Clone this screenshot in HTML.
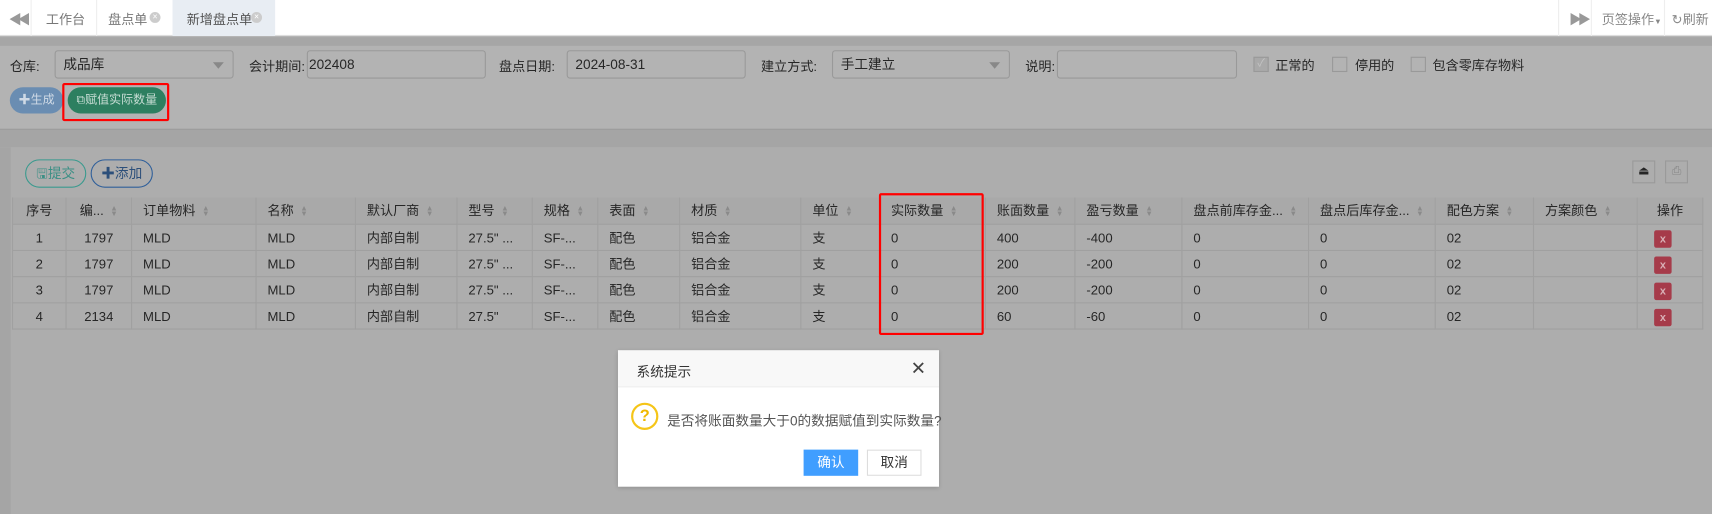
<!DOCTYPE html>
<html><head><meta charset="utf-8"><style>
*{margin:0;padding:0;box-sizing:border-box}
html,body{width:1712px;height:514px;overflow:hidden;background:#b3b3b3}
#w{position:absolute;left:0;top:0;width:1568px;height:471px;transform:scale(1.09184,1.0913);transform-origin:0 0;font-family:"Liberation Sans","Noto Sans CJK SC",sans-serif;font-size:12px;color:#262626}
.a{position:absolute;white-space:nowrap}
.inp{position:absolute;height:26px;border:1px solid #999;border-radius:3px;background:#b3b3b3;padding-left:7px;line-height:24px;font-size:12.5px}
.tri{position:absolute;right:8px;top:10px;border:5px solid transparent;border-top:6px solid #888}
.cb{position:absolute;width:14px;height:14px;border:1px solid #999;background:#b3b3b3;top:52px}
.th,.td{position:absolute;border-right:1px solid #a0a0a0;border-bottom:1px solid #a0a0a0;padding-left:10px;line-height:24px;overflow:hidden;white-space:nowrap}
.th{background:#a9a9a9;height:25px}
.s{display:inline-block;margin-left:6px;font-size:7px;color:#8a8a8a;line-height:5px;vertical-align:middle}
.del{position:absolute;width:16px;height:16px;background:#a63b4a;border-radius:2px;color:#d9b0b6;font-size:10px;font-weight:bold;text-align:center;line-height:17px}
</style></head><body><div id="w">
<div class="a" style="left:0;top:0;width:1568px;height:33px;background:#fff;border-bottom:1px solid #ddd"></div>
<div class="a" style="left:8px;top:9px;color:#999;font-size:12px;letter-spacing:-4px">◀◀</div>
<div class="a" style="left:28px;top:0;width:1px;height:33px;background:#eee"></div>
<div class="a" style="left:42px;top:9px;color:#777">工作台</div>
<div class="a" style="left:88px;top:0;width:1px;height:33px;background:#eee"></div>
<div class="a" style="left:99px;top:9px;color:#777">盘点单</div>
<div class="a" style="left:137px;top:11px;width:10px;height:10px;border-radius:50%;background:#ccc;color:#fff;font-size:8px;line-height:10px;text-align:center">×</div>
<div class="a" style="left:158px;top:0;width:94px;height:33px;background:#e8edf3"></div>
<div class="a" style="left:171px;top:9px;color:#555">新增盘点单</div>
<div class="a" style="left:230px;top:11px;width:10px;height:10px;border-radius:50%;background:#ccc;color:#fff;font-size:8px;line-height:10px;text-align:center">×</div>
<div class="a" style="left:1427px;top:0;width:1px;height:33px;background:#eee"></div>
<div class="a" style="left:1437px;top:9px;color:#999;font-size:12px;letter-spacing:-4px">▶▶</div>
<div class="a" style="left:1457px;top:0;width:1px;height:33px;background:#eee"></div>
<div class="a" style="left:1467px;top:9px;color:#888">页签操作<span style="font-size:7px">▼</span></div>
<div class="a" style="left:1524px;top:0;width:1px;height:33px;background:#eee"></div>
<div class="a" style="left:1531px;top:9px;color:#888">↻刷新</div>
<div class="a" style="left:0;top:34px;width:1568px;height:8px;background:#a6a6a6"></div>
<div class="a" style="left:0;top:118px;width:1568px;height:17px;background:#a5a5a5;border-top:1px solid #9c9c9c"></div>
<div class="a" style="left:0;top:135px;width:10px;height:336px;background:#a5a5a5"></div>
<div class="a" style="left:9px;top:52px">仓库:</div>
<div class="inp" style="left:50px;top:46px;width:164px">成品库<div class="tri"></div></div>
<div class="a" style="left:228px;top:52px">会计期间:</div>
<div class="inp" style="left:281px;top:46px;width:164px;padding-left:1px">202408</div>
<div class="a" style="left:457px;top:52px">盘点日期:</div>
<div class="inp" style="left:519px;top:46px;width:164px">2024-08-31</div>
<div class="a" style="left:697px;top:52px">建立方式:</div>
<div class="inp" style="left:762px;top:46px;width:163px">手工建立<div class="tri"></div></div>
<div class="a" style="left:939px;top:52px">说明:</div>
<div class="inp" style="left:968px;top:46px;width:165px"></div>
<div class="cb" style="left:1148px;background:#a9a9a9;color:#c4c4c4;font-size:10px;line-height:12px;text-align:center">✓</div>
<div class="a" style="left:1168px;top:51px">正常的</div>
<div class="cb" style="left:1220px"></div>
<div class="a" style="left:1241px;top:51px">停用的</div>
<div class="cb" style="left:1292px"></div>
<div class="a" style="left:1312px;top:51px">包含零库存物料</div>
<div class="a" style="left:9px;top:80px;width:49px;height:24px;border-radius:12px;background:#6a8db2;color:#d0dae6;font-size:11px;line-height:24px;text-align:center">✚生成</div>
<div class="a" style="left:62px;top:80px;width:90px;height:24px;border-radius:12px;background:#2d7f60;color:#c7ddd4;font-size:11px;line-height:24px;text-align:center">⧉赋值实际数量</div>
<div class="a" style="left:57px;top:76px;width:98px;height:35px;border:2px solid #f00;border-radius:2px"></div>
<div class="a" style="left:10px;top:135px;width:1558px;height:336px;background:#adadad"></div>
<div class="a" style="left:23px;top:146px;width:56px;height:26px;border:1px solid #3a9a8e;border-radius:13px;color:#3b8f85;font-size:12.5px;line-height:24px;text-align:center">🖫提交</div>
<div class="a" style="left:83px;top:146px;width:57px;height:26px;border:1px solid #2f5f9a;border-radius:13px;color:#2c4f7a;font-size:12.5px;line-height:24px;text-align:center"><b>✚</b>添加</div>
<div class="a" style="left:1495px;top:147px;width:21px;height:21px;border:1px solid #999;font-size:11px;text-align:center;line-height:19px">⏏</div>
<div class="a" style="left:1525px;top:147px;width:21px;height:21px;border:1px solid #999;color:#888;font-size:11px;text-align:center;line-height:19px">⎙</div>
<div id="t"></div>
<div class="a" style="left:805px;top:177px;width:96px;height:130px;border:2px solid #f00;border-radius:2px"></div>
<div class="a" style="left:566px;top:321px;width:294px;height:125px;background:#fff;box-shadow:0 1px 4px rgba(0,0,0,.2)"></div>
<div class="a" style="left:566px;top:321px;width:294px;height:34px;background:#f8f8f8;border-bottom:1px solid #eee"></div>
<div class="a" style="left:583px;top:330px;color:#333;font-size:12.5px">系统提示</div>
<div class="a" style="left:834px;top:328px;color:#444;font-size:17px">✕</div>
<div class="a" style="left:578px;top:369px;width:25px;height:25px;border:2px solid #f5c518;border-radius:50%;color:#f0b800;font-size:15px;font-weight:bold;text-align:center;line-height:21px">?</div>
<div class="a" style="left:611px;top:375px;color:#555;font-size:12.5px">是否将账面数量大于0的数据赋值到实际数量?</div>
<div class="a" style="left:736px;top:412px;width:50px;height:24px;background:#409eff;color:#fff;text-align:center;line-height:24px;font-size:12.5px">确认</div>
<div class="a" style="left:794px;top:412px;width:50px;height:24px;border:1px solid #ddd;color:#333;text-align:center;line-height:22px;font-size:12.5px">取消</div>
</div>
<script>
var cols=[[11,61,'序号',0,1],[61,121,'编...',1,1],[121,235,'订单物料',1],[235,326,'名称',1],[326,419,'默认厂商',1],[419,488,'型号',1],[488,548,'规格',1],[548,623,'表面',1],[623,734,'材质',1],[734,806,'单位',1],[806,903,'实际数量',1],[903,985,'账面数量',1],[985,1083,'盈亏数量',1],[1083,1199,'盘点前库存金...',1],[1199,1315,'盘点后库存金...',1],[1315,1405,'配色方案',1],[1405,1500,'方案颜色',1],[1500,1560,'操作',0,1]];
var rows=[['1','1797','MLD','MLD','内部自制','27.5" ...','SF-...','配色','铝合金','支','0','400','-400','0','0','02',''],
['2','1797','MLD','MLD','内部自制','27.5" ...','SF-...','配色','铝合金','支','0','200','-200','0','0','02',''],
['3','1797','MLD','MLD','内部自制','27.5" ...','SF-...','配色','铝合金','支','0','200','-200','0','0','02',''],
['4','2134','MLD','MLD','内部自制','27.5"','SF-...','配色','铝合金','支','0','60','-60','0','0','02','']];
var h='';
cols.forEach(function(c,i){
 var st='left:'+c[0]+'px;top:181px;width:'+(c[1]-c[0])+'px;'+(c[4]?'text-align:center;padding-left:0;':'')+(i==0?'border-left:1px solid #a0a0a0;':'');
 h+='<div class="th" style="'+st+'">'+c[2]+(c[3]?'<span class="s">▲<br>▼</span>':'')+'</div>';
 rows.forEach(function(r,j){
  var y=206+j*24;
  var st2='left:'+c[0]+'px;top:'+y+'px;width:'+(c[1]-c[0])+'px;height:24px;'+(c[4]?'text-align:center;padding-left:0;':'')+(i==0?'border-left:1px solid #a0a0a0;':'');
  var txt=i<17?r[i]:'';
  h+='<div class="td" style="'+st2+'">'+txt+'</div>';
  if(i==17)h+='<div class="del" style="left:1515px;top:'+(y+5)+'px">x</div>';
 });
});
document.getElementById('t').outerHTML=h;
</script>
</body></html>
